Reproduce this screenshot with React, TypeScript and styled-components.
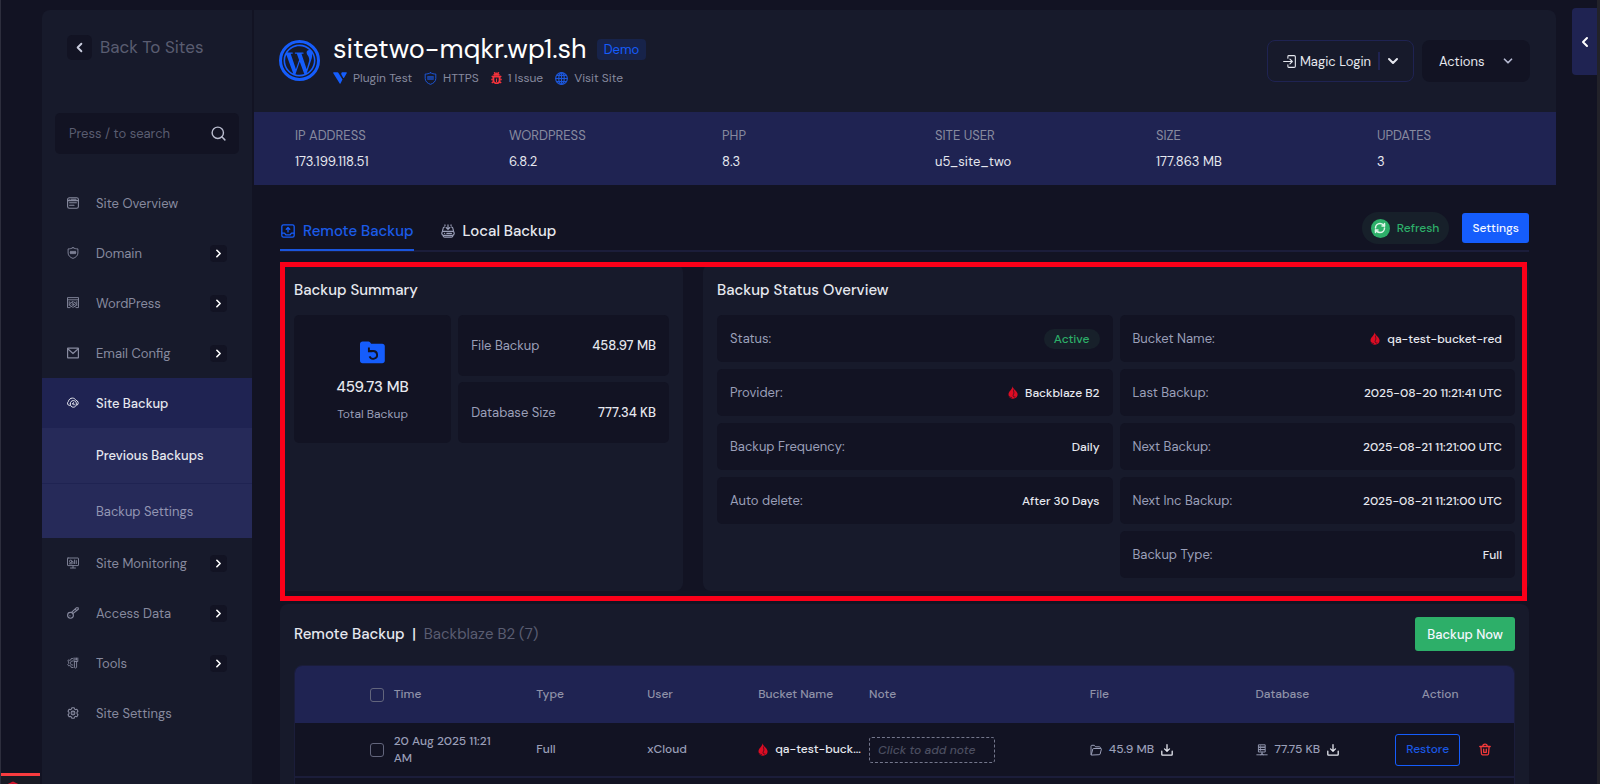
import React from 'react';
import styled, { createGlobalStyle } from 'styled-components';
import { ChevronDown, ChevronLeft, ChevronRight, RefreshCw, Search } from 'lucide-react';
import { FaWordpressSimple } from 'react-icons/fa';

const c = {
  bg: '#121323',
  panel: '#171a2b',
  navy: '#1f2352',
  navySub: '#262a59',
  blue: '#155dfc',
  green: '#2daf69',
  greenTint: '#17202a',
  text: '#e6e8ef',
  soft: '#9a9fb8',
  muted: '#878a9f',
  faint: '#5a5d71',
  line: '#1b1d3a',
};

const GlobalStyle = createGlobalStyle`
  *, *::before, *::after { box-sizing: border-box; }
  body {
    margin: 0;
    background: ${c.bg};
    color: ${c.text};
    font-family: "DM Sans", Inter, "Liberation Sans", sans-serif;
    font-size: 13px;
  }
  button, input { font: inherit; color: inherit; }
  button { cursor: pointer; }
  a { color: inherit; text-decoration: none; }
  h1, h2, dl, dd { margin: 0; padding: 0; }
  svg { display: block; flex: none; }
`;

/* ---------- page frame ---------- */

const Page = styled.div`
  position: relative;
  display: flex;
  gap: 2px;
  height: 100vh;
  overflow: hidden;
  padding: 10px 41px 0;
  border-left: 1px solid #2d2e3d;
  border-right: 3px solid #222229;
`;

const Sidebar = styled.aside`
  flex: 0 0 210px;
  min-width: 0;
  background: ${c.panel};
  border-top-left-radius: 8px;
`;

const Main = styled.main`
  flex: 1;
  min-width: 0;
`;

/* ---------- sidebar ---------- */

const BackLink = styled.a`
  display: flex;
  align-items: center;
  gap: 8px;
  padding: 25px 25px 0;
  font-size: 17px;
  line-height: 25px;
  white-space: nowrap;
  color: ${c.faint};
`;

const BackIcon = styled.span`
  display: grid;
  place-items: center;
  width: 25px;
  height: 25px;
  border-radius: 5px;
  background: ${c.bg};
  color: #c9ccdd;
`;

const SearchBox = styled.label`
  display: flex;
  align-items: center;
  height: 41px;
  margin: 53px 13px 24px;
  padding: 0 12px 0 14px;
  border-radius: 5px;
  background: ${c.bg};
  color: #b9bcce;
`;

const SearchInput = styled.input`
  flex: 1;
  width: 100%;
  min-width: 0;
  padding: 0;
  border: 0;
  outline: 0;
  background: none;
  &::placeholder { color: ${c.faint}; opacity: 1; }
`;

const NavLink = styled.a<{ $active?: boolean }>`
  display: flex;
  align-items: center;
  gap: 17px;
  height: 50px;
  padding: 0 25px;
  background: ${p => (p.$active ? c.navy : 'none')};
  color: ${p => (p.$active ? c.text : c.muted)};
  font-weight: ${p => (p.$active ? 500 : 400)};
`;

const NavLabel = styled.span`
  flex: 1;
  white-space: nowrap;
`;

const NavChevron = styled.span`
  display: grid;
  place-items: center;
  width: 17px;
  height: 17px;
  border-radius: 4px;
  background: ${c.bg};
  color: #fff;
`;

const SubLink = styled.a<{ $current?: boolean }>`
  display: flex;
  align-items: center;
  height: 55px;
  padding-left: 54px;
  background: ${c.navySub};
  color: ${p => (p.$current ? c.text : '#9396b3')};
  font-weight: ${p => (p.$current ? 500 : 400)};
  & + & { border-top: 1px solid ${c.navy}; }
`;

/* ---------- site header ---------- */

const Header = styled.header`
  display: flex;
  align-items: flex-start;
  gap: 13px;
  height: 102px;
  padding: 23px 26px 0 25px;
  background: ${c.panel};
  border-top-right-radius: 8px;
`;

const Logo = styled.span`
  display: grid;
  place-items: center;
  width: 41px;
  height: 41px;
  margin-top: 7px;
  border: 3px solid ${c.blue};
  border-radius: 50%;
  color: ${c.blue};
`;

const SiteInfo = styled.div`
  flex: 1;
`;

const TitleRow = styled.div`
  display: flex;
  align-items: center;
  gap: 10px;
`;

const Title = styled.h1`
  font-size: 27px;
  line-height: 32px;
  font-weight: 400;
  color: #fff;
`;

const DemoBadge = styled.span`
  padding: 0 7px;
  border-radius: 4px;
  background: #17234a;
  color: ${c.blue};
  font-size: 13px;
  line-height: 21px;
`;

const MetaRow = styled.div`
  display: flex;
  align-items: center;
  gap: 12px;
  margin-top: 5px;
`;

const MetaLink = styled.a`
  display: flex;
  align-items: center;
  gap: 6px;
  font-size: 12px;
  line-height: 16px;
  color: ${c.muted};
`;

const BlueIcon = styled.span`
  color: #1c56d8;
`;

const HeaderActions = styled.div`
  display: flex;
  gap: 8px;
  margin-top: 7px;
`;

const SplitButton = styled.div`
  display: flex;
  align-items: center;
  height: 42px;
  padding: 0 12px 0 15px;
  border: 1px solid ${c.navy};
  border-radius: 8px;
`;

const PlainButton = styled.button`
  display: flex;
  align-items: center;
  gap: 4px;
  padding: 0;
  border: 0;
  background: none;
`;

const MenuToggle = styled(PlainButton)`
  height: 18px;
  margin-left: 7px;
  padding-left: 5px;
  border-left: 2px solid ${c.navy};
`;

const ActionsButton = styled(PlainButton)`
  justify-content: space-between;
  width: 108px;
  height: 42px;
  padding: 0 15px 0 17px;
  border-radius: 8px;
  background: ${c.bg};
`;

/* ---------- stats ---------- */

const Stats = styled.dl`
  display: grid;
  grid-template-columns: 214fr 213fr 213fr 221fr 221fr 179fr;
  height: 73px;
  padding: 15px 0 0 41px;
  background: ${c.navy};
  line-height: 18px;
`;

const StatLabel = styled.dt`
  color: ${c.muted};
`;

const StatValue = styled.dd`
  margin-top: 8px;
  color: ${c.text};
`;

/* ---------- content ---------- */

const Content = styled.div`
  padding: 24px 27px 0 26px;
`;

const TabBar = styled.div`
  display: flex;
  align-items: flex-start;
  height: 43px;
  border-bottom: 2px solid ${c.line};
`;

const Tab = styled.button<{ $active?: boolean }>`
  display: flex;
  align-items: center;
  gap: 8px;
  height: 42px;
  margin-right: 26px;
  padding: 4px 0 0 1px;
  border: 0;
  border-bottom: 2px solid ${p => (p.$active ? '#1a55dc' : 'transparent')};
  background: none;
  color: ${p => (p.$active ? '#1b5be8' : c.text)};
  font-size: 15px;
  font-weight: 500;
  svg { color: ${p => (p.$active ? c.blue : c.soft)}; }
`;

const TabActions = styled.div`
  display: flex;
  align-items: center;
  gap: 13px;
  margin: 3px 0 0 auto;
`;

const RefreshButton = styled.button`
  display: flex;
  align-items: center;
  gap: 7px;
  height: 32px;
  padding: 0 10px 0 9px;
  border: 0;
  border-radius: 16px;
  background: ${c.greenTint};
  color: ${c.green};
  font-size: 12px;
  font-weight: 500;
`;

const RefreshDot = styled.span`
  display: grid;
  place-items: center;
  width: 19px;
  height: 19px;
  border-radius: 50%;
  background: ${c.green};
  color: #dff5e9;
`;

const SolidButton = styled.button<{ $tone: 'blue' | 'green' }>`
  height: ${p => (p.$tone === 'blue' ? 30 : 34)}px;
  padding: 0 ${p => (p.$tone === 'blue' ? 10 : 12)}px;
  border: 0;
  border-radius: 3px;
  background: ${p => (p.$tone === 'blue' ? c.blue : c.green)};
  color: #f4f7ff;
  font-size: ${p => (p.$tone === 'blue' ? 12 : 13)}px;
  font-weight: 500;
`;

const Overview = styled.section`
  position: relative;
  display: grid;
  grid-template-columns: 403fr 826fr;
  gap: 20px;
  margin-top: 12px;
`;

const Highlight = styled.div`
  position: absolute;
  inset: -2px 2px -10px 0;
  border: 5px solid #fb0019;
  pointer-events: none;
`;

const Card = styled.div`
  padding: 13px 14px;
  border-radius: 8px;
  background: ${c.panel};
`;

const CardTitle = styled.h2`
  margin-bottom: 12px;
  font-size: 15px;
  line-height: 26px;
  font-weight: 500;
`;

const SummaryGrid = styled.div`
  display: grid;
  grid-template-columns: 158fr 212fr;
  gap: 6px 7px;
`;

const Tile = styled.div`
  display: flex;
  align-items: center;
  justify-content: space-between;
  height: 61px;
  padding: 0 13px;
  border-radius: 5px;
  background: ${c.bg};
  color: ${c.soft};
`;

const TotalTile = styled(Tile)`
  grid-row: span 2;
  flex-direction: column;
  justify-content: flex-start;
  height: auto;
  padding-top: 26px;
  font-size: 12px;
`;

const TotalValue = styled.strong`
  margin: 14px 0 10px;
  font-size: 15px;
  line-height: 18px;
  font-weight: 500;
  color: ${c.text};
`;

const TileValue = styled.strong<{ $small?: boolean }>`
  display: flex;
  align-items: center;
  gap: 7px;
  font-size: ${p => (p.$small ? 12 : 13)}px;
  font-weight: 500;
  color: ${c.text};
`;

const StatusColumns = styled.div`
  display: grid;
  grid-template-columns: 1fr 1fr;
  gap: 7px;
`;

const StatusColumn = styled.div`
  display: flex;
  flex-direction: column;
  gap: 7px;
`;

const StatusTile = styled(Tile)`
  height: 47px;
`;

const ActiveBadge = styled.span`
  padding: 0 10px;
  border-radius: 10px;
  background: ${c.greenTint};
  color: ${c.green};
  font-size: 12px;
  line-height: 20px;
  font-weight: 500;
`;

/* ---------- backup table ---------- */

const ListCard = styled(Card)`
  margin-top: 13px;
`;

const ListHead = styled.div`
  display: flex;
  align-items: center;
  justify-content: space-between;
  margin-bottom: 14px;
`;

const ListTitle = styled.h2`
  font-size: 15px;
  font-weight: 500;
  span { margin-left: 4px; color: ${c.faint}; font-weight: 400; }
`;

const TableFrame = styled.div`
  overflow: hidden;
  border: 1px solid ${c.line};
  border-radius: 8px;
`;

const Table = styled.table`
  width: 100%;
  table-layout: fixed;
  border-collapse: collapse;
  font-size: 12px;
  font-weight: 500;
  line-height: 17px;
  color: ${c.soft};
`;

const HeadCell = styled.th<{ $center?: boolean }>`
  height: 57px;
  padding: 0;
  background: ${c.navy};
  color: #8f92a8;
  font-weight: 500;
  text-align: ${p => (p.$center ? 'center' : 'left')};
`;

const Cell = styled.td<{ $wrap?: boolean }>`
  height: 54px;
  padding: ${p => (p.$wrap ? '0 36px 0 0' : '0')};
  border-bottom: 2px solid ${c.line};
  background: ${c.bg};
`;

const Check = styled.input`
  appearance: none;
  display: block;
  width: 14px;
  height: 14px;
  margin: 0 0 0 75px;
  border: 1px solid #62657c;
  border-radius: 3px;
`;

const Inline = styled.div`
  display: flex;
  align-items: center;
  gap: 7px;
`;

const BucketName = styled.span`
  white-space: nowrap;
  color: ${c.text};
`;

const NoteInput = styled.input`
  display: block;
  width: 126px;
  height: 26px;
  padding: 0 8px;
  border: 1px dashed #74778c;
  border-radius: 3px;
  outline: 0;
  background: none;
  font-style: italic;
  &::placeholder { color: #4b4e60; opacity: 1; }
`;

const IconButton = styled.button<{ $danger?: boolean }>`
  display: block;
  padding: 0;
  border: 0;
  background: none;
  color: ${p => (p.$danger ? '#f43a3a' : '#e6e8f0')};
`;

const RowActions = styled.div`
  display: flex;
  align-items: center;
  justify-content: center;
  gap: 19px;
  padding-left: 6px;
`;

const RestoreButton = styled.button`
  width: 65px;
  height: 32px;
  padding: 0;
  border: 1px solid ${c.blue};
  border-radius: 3px;
  background: none;
  color: #1a58e4;
  font-weight: 500;
`;

/* ---------- floating pieces ---------- */

const DrawerToggle = styled.button`
  position: absolute;
  top: 8px;
  right: 0;
  display: grid;
  place-items: center;
  width: 25px;
  height: 67px;
  padding: 0;
  border: 0;
  border-radius: 4px 0 0 4px;
  background: ${c.navy};
  color: #fff;
`;

const DebugBar = styled.div`
  position: absolute;
  left: -1px;
  bottom: 0;
  width: 40px;
  height: 11px;
  padding: 1px 0 0 7px;
  overflow: hidden;
  border-top: 3px solid #f93c3f;
  background: #191a24;
`;

/* ---------- icons ---------- */

type IconProps = { children: React.ReactNode; w?: number; h?: number; sw?: number };
const Icon = ({ children, w = 12, h = w, sw = 1 }: IconProps) => (
  <svg width={w} height={h} viewBox="0 0 12 12" fill="none" stroke="currentColor" strokeWidth={sw} strokeLinecap="round" strokeLinejoin="round" aria-hidden="true">
    {children}
  </svg>
);

const OverviewIcon = () => (
  <Icon sw={1.1}><rect x=".6" y=".8" width="10.8" height="10.4" rx="1.8" /><path d="M.8 3.6h10.4M2.6 5.800h6.800M2.600 8.200h4.400M2.200 2.200h.1M4 2.200h5" /></Icon>
);
const ShieldIcon = ({ size = 12 }: { size?: number }) => (
  <Icon w={size} sw={0.9}><path d="M6 .7C7.500 1.500 9 1.900 10.900 1.900V6c0 2.700-2.200 4.500-4.900 5.400C3.300 10.500 1.100 8.700 1.100 6V1.900C3 1.900 4.500 1.500 6 .7Z" /><path d="M3.400 4.400h5.200M3.200 5.500h5.600M3.400 6.600h5.200" /></Icon>
);
const WindowGearIcon = () => (
  <Icon sw={0.9}><path d="M3 10.600H.5V.600h11v10H9M.6 2.800h10.800M2.200 4.600v4M9.800 4.600v4" /><circle cx="6" cy="7.500" r="1" /><path d="m6 4.500.9.9 1.300-.1.200 1.200 1 .9-1 .9-.2 1.300-1.300-.1-.9 1.100-.9-1.100-1.300.1-.2-1.300-1-.9 1-.9.2-1.200 1.300.1Z" /></Icon>
);
const MailIcon = () => (
  <Icon sw={1.2}><rect x=".6" y="1.200" width="10.800" height="9.600" rx=".3" /><path d="m1 2 5 4.500L11 2" /></Icon>
);
const CloudBackupIcon = () => (
  <Icon sw={1}><path d="M2.400 8.600A2.300 2.300 0 0 1 1.300 4.600C1.700 2.500 3.500 1.100 5.400 1.100c1.600 0 2.900.9 3.500 2.200a2.800 2.800 0 0 1 1.300 4.900" /><path d="M3.200 6.900c0-2 1.400-3.300 3.100-3.300S9.400 4.900 9.400 6.900 8 10.200 6.300 10.200 3.200 8.900 3.200 6.900M6.600 5.600 5.200 6.900h1.900v1" /></Icon>
);
const MonitorIcon = () => (
  <Icon sw={0.9}><rect x=".5" y="1" width="11" height="7.600" rx=".5" /><path d="M6 8.700v2M3.500 11h5M6 6.600V5M7.600 6.600V3M9.300 6.600V3.600M2.300 6.800h2.600" /><circle cx="3.800" cy="4.400" r="1.300" /></Icon>
);
const KeyIcon = () => (
  <Icon sw={1.1}><path d="M5.800 6.600 11.300 2.200 11.200.8 9.300.8 4.500 5.300M8.400 2.400l1 1" /><circle cx="3.500" cy="8.300" r="2.900" /><path d="M2.800 8.800h.2" /></Icon>
);
const ToolsIcon = () => (
  <Icon sw={0.9}><path d="M5.500 1.500H4.300L4 2.700l-1.500.6-.9-.5-.8 1.200.9.900v1.700l-.9.900.8 1.300 1.200-.2 1.200.7.300 1.200h1.800M5.700 4H4.500L3.600 5.200v1.600l.9 1.200h1.300M7 1v3.500h3.800V1M8.200 1v2M9.500 1v2M7.400 4.600v5.600c0 1.100 2.200 1.100 2.200 0V4.600" /></Icon>
);
const GearIcon = () => (
  <Icon sw={1.1}><path d="M4.900.7h2.200l.5 1.400.8.500 1.500-.3 1.100 1.900-1 1.200v1.200l1 1.200-1.100 1.900-1.500-.3-.8.500-.5 1.400H4.900l-.5-1.400-.8-.5-1.500.3L1 7.800l1-1.200V5.400L1 4.200l1.100-1.900 1.500.3.8-.5Z" /><circle cx="6" cy="6" r="1.900" /><circle cx="6" cy="6" r=".2" /></Icon>
);
const VultrIcon = () => (
  <svg width="14" height="12" viewBox="0 0 14 12" fill="#155dfc" aria-hidden="true">
    <path d="M.3.300h4.200c.4 0 .8.200 1 .6l4 6.500-2 4c-.2.400-.6.400-.8 0L.3 1.300Z" />
    <path d="M9.300.300h3.900c.5 0 .7.500.5.900l-2.600 4.600c-.2.400-.7.400-.9 0L8.600 3C7.900 1.800 8.300.500 9.300.300Z" />
  </svg>
);
const BugIcon = () => (
  <svg width="11" height="12" viewBox="0 0 11 12" aria-hidden="true">
    <path d="M2.800 3.200C2.800 1.700 4 1 5.500 1s2.700.7 2.700 2.200Z" fill="#f4333c" stroke="#f4333c" />
    <path d="M.7 4 2 5M10.300 4 9 5M.3 7.500h1.500M10.700 7.500H9.200M.8 11 2.200 9.800M10.200 11 8.800 9.800M3.200.3l.6.800M7.800.3l-.6.800" stroke="#f4333c" strokeWidth="1.400" />
    <path d="M2.400 4.600h6.200v3.600a3.100 3.100 0 0 1-6.200 0Z" fill="none" stroke="#f4333c" strokeWidth="1.800" />
    <path d="M5.500 6.600v3.600" stroke="#f4333c" />
  </svg>
);
const GlobeIcon = () => (
  <Icon w={13} sw={1.1}><circle cx="6" cy="6" r="5.400" /><ellipse cx="6" cy="6" rx="2.500" ry="5.400" /><path d="M6 .6v10.800M.6 6h10.800M1.500 3.200h9M1.500 8.800h9" /></Icon>
);
const LoginIcon = () => (
  <Icon w={13}><path d="M4.500 3V1.400c0-.5.300-.8.800-.8h5c.700 0 1.100.4 1.100 1.100v8.600c0 .7-.4 1.100-1.100 1.100h-5c-.5 0-.8-.3-.8-.8V9M.6 6h7.800M6.400 3.800 8.600 6 6.400 8.200" /></Icon>
);
const RemoteIcon = () => (
  <Icon w={14} sw={1.1}><rect x=".7" y=".7" width="10.600" height="10.600" rx="1.500" /><path d="M1 7.800h2l1.200 1.600h3.600L9 7.800h2M6 6.800V3.200M4.500 4.500 6 3l1.500 1.500" /></Icon>
);
const LocalIcon = () => (
  <Icon w={14}><path d="M3 2.600c-.8.100-1.100.5-1.200 1.200L1.300 6.200M9 2.600c.8.100 1.100.5 1.200 1.200l.5 2.400M6 .8v3.600M4.400 3 6 4.600 7.600 3M3.400.8v.6M8.600.8v.6" /><rect x=".7" y="6.300" width="10.600" height="3.400" rx="1.500" /><path d="M1.800 10.200c.2.700.6 1.100 1.300 1.100h5.800c.7 0 1.100-.4 1.300-1.100M3 8h.1M5 8h4" /></Icon>
);
const FlameIcon = () => (
  <svg width="10" height="13" viewBox="0 0 10 13" aria-hidden="true">
    <path d="M4.600.2c.3 1.600 1 2.500 2.300 3.700C8.500 5.400 9.600 6.700 9.600 8.600c0 2.500-2 4.100-4.500 4.100S.5 11 .5 8.400C.5 5 4.300 3.800 4.600.2Z" fill="#dd0c23" />
    <path d="M5.500 3.600c-.3 1.600.8 2.600.2 4.200-.4 1-.9 1.600-.4 2.500.5.800 1.300.8 2 .5M1 10.200c1 1.100 2 1.400 3 1.400" fill="none" stroke="#121323" strokeWidth=".7" />
  </svg>
);
const FolderRestoreIcon = () => (
  <svg width="25" height="23" viewBox="0 0 25 23" fill="none" aria-hidden="true">
    <path d="M2.600.5h5.800c.7 0 1.200.3 1.600.8l1.200 1.500h11c1.500 0 2.600 1 2.600 2.500v14.400c0 1.500-1.100 2.500-2.600 2.500H2.600C1.100 22.200 0 21.200 0 19.700V3C0 1.500 1.100.5 2.600.5Z" fill="#155dfc" />
    <path d="M8.900 6.600v3.600h3.600M9.200 10h4a3.900 3.900 0 1 1-3.600 5.400" stroke="#121323" strokeWidth="1.900" />
  </svg>
);
const FolderIcon = () => (
  <Icon><path d="M1 10.500V2.200c0-.6.300-.9.900-.9h2.400l1.200 1.500h4c.6 0 .9.400.9 1v.8M1.300 10.700 2.800 5c.1-.3.400-.5.700-.5h7.300c.5 0 .7.300.6.700l-1.300 4.900c-.1.400-.4.600-.8.600Z" /></Icon>
);
const DatabaseIcon = () => (
  <Icon sw={0.9}><path d="M2.800.8h6.400v2.400H2.800ZM2.800 3.200h6.400v2.400H2.800ZM2.800 5.600h6.400V8H2.800ZM6 8v2.400M.8 10.800h10.400M4.600 10.800c0-1.400 2.800-1.400 2.800 0M4.400 2h.1M4.400 4.400h.1M4.400 6.800h.1" /></Icon>
);
const DownloadIcon = () => (
  <Icon sw={1.3}><path d="M6 .7v6.500M3.500 4.900 6 7.300l2.500-2.400M.8 7.200v3.400c0 .4.200.6.600.6h9.200c.4 0 .6-.2.6-.6V7.200" /></Icon>
);
const TrashIcon = () => (
  <Icon w={12} h={13} sw={1.3}><path d="M.8 3h10.400M3.800 2.800C3.800 1.300 4.500.700 6 .700s2.200.6 2.200 2.100M1.900 3.200l.6 7.200c.1.600.4.900 1 .9h5c.6 0 .9-.3 1-.9l.6-7.200M4.700 5.600v3.200h2.600V5.600" /></Icon>
);

/* ---------- data ---------- */

type NavEntry = { label: string; icon: React.ReactNode; more?: boolean; children?: string[] };
const nav: NavEntry[] = [
  { label: 'Site Overview', icon: <OverviewIcon /> },
  { label: 'Domain', icon: <ShieldIcon />, more: true },
  { label: 'WordPress', icon: <WindowGearIcon />, more: true },
  { label: 'Email Config', icon: <MailIcon />, more: true },
  { label: 'Site Backup', icon: <CloudBackupIcon />, children: ['Previous Backups', 'Backup Settings'] },
  { label: 'Site Monitoring', icon: <MonitorIcon />, more: true },
  { label: 'Access Data', icon: <KeyIcon />, more: true },
  { label: 'Tools', icon: <ToolsIcon />, more: true },
  { label: 'Site Settings', icon: <GearIcon /> },
];

const stats = [
  ['IP ADDRESS', '173.199.118.51'],
  ['WORDPRESS', '6.8.2'],
  ['PHP', '8.3'],
  ['SITE USER', 'u5_site_two'],
  ['SIZE', '177.863 MB'],
  ['UPDATES', '3'],
];

type StatusEntry = { label: string; value: string; badge?: boolean; flame?: boolean };
const statusColumns: StatusEntry[][] = [
  [
    { label: 'Status:', value: 'Active', badge: true },
    { label: 'Provider:', value: 'Backblaze B2', flame: true },
    { label: 'Backup Frequency:', value: 'Daily' },
    { label: 'Auto delete:', value: 'After 30 Days' },
  ],
  [
    { label: 'Bucket Name:', value: 'qa-test-bucket-red', flame: true },
    { label: 'Last Backup:', value: '2025-08-20 11:21:41 UTC' },
    { label: 'Next Backup:', value: '2025-08-21 11:21:00 UTC' },
    { label: 'Next Inc Backup:', value: '2025-08-21 11:21:00 UTC' },
    { label: 'Backup Type:', value: 'Full' },
  ],
];

/* column widths as shares of the table */
const ColCheck = styled.col`width: 8.1%;`;
const ColTime = styled.col`width: 11.7%;`;
const ColStandard = styled.col`width: 9.1%;`;
const ColNote = styled.col`width: 18.1%;`;
const ColFile = styled.col`width: 13.6%;`;
const ColAction = styled.col`width: 12.1%;`;

export default function App() {
  return (
    <>
      <GlobalStyle />
      <Page>
        <Sidebar>
          <BackLink href="#sites">
            <BackIcon><ChevronLeft size={15} strokeWidth={3} /></BackIcon>
            Back To Sites
          </BackLink>
          <SearchBox>
            <SearchInput type="text" placeholder="Press / to search" aria-label="Search" />
            <Search size={17} strokeWidth={2} />
          </SearchBox>
          <nav>
            {nav.map(item => (
              <React.Fragment key={item.label}>
                <NavLink href="#section" $active={!!item.children}>
                  {item.icon}
                  <NavLabel>{item.label}</NavLabel>
                  {item.more && <NavChevron><ChevronRight size={13} strokeWidth={3} /></NavChevron>}
                </NavLink>
                {item.children?.map((child, i) => (
                  <SubLink key={child} href="#section" $current={i === 0}>{child}</SubLink>
                ))}
              </React.Fragment>
            ))}
          </nav>
        </Sidebar>

        <Main>
          <Header>
            <Logo><FaWordpressSimple size={33} /></Logo>
            <SiteInfo>
              <TitleRow>
                <Title>sitetwo-mqkr.wp1.sh</Title>
                <DemoBadge>Demo</DemoBadge>
              </TitleRow>
              <MetaRow>
                <MetaLink href="#plugin"><VultrIcon />Plugin Test</MetaLink>
                <MetaLink href="#https"><BlueIcon><ShieldIcon size={13} /></BlueIcon>HTTPS</MetaLink>
                <MetaLink href="#issues"><BugIcon />1 Issue</MetaLink>
                <MetaLink href="#visit"><BlueIcon><GlobeIcon /></BlueIcon>Visit Site</MetaLink>
              </MetaRow>
            </SiteInfo>
            <HeaderActions>
              <SplitButton>
                <PlainButton><LoginIcon />Magic Login</PlainButton>
                <MenuToggle aria-label="More login options"><ChevronDown size={16} strokeWidth={3} /></MenuToggle>
              </SplitButton>
              <ActionsButton>Actions<ChevronDown size={14} strokeWidth={3} color="#b4b8d0" /></ActionsButton>
            </HeaderActions>
          </Header>

          <Stats>
            {stats.map(([label, value]) => (
              <div key={label}>
                <StatLabel>{label}</StatLabel>
                <StatValue>{value}</StatValue>
              </div>
            ))}
          </Stats>

          <Content>
            <TabBar>
              <Tab $active><RemoteIcon />Remote Backup</Tab>
              <Tab><LocalIcon />Local Backup</Tab>
              <TabActions>
                <RefreshButton><RefreshDot><RefreshCw size={12} strokeWidth={3} /></RefreshDot>Refresh</RefreshButton>
                <SolidButton $tone="blue">Settings</SolidButton>
              </TabActions>
            </TabBar>

            <Overview>
              <Card>
                <CardTitle>Backup Summary</CardTitle>
                <SummaryGrid>
                  <TotalTile>
                    <FolderRestoreIcon />
                    <TotalValue>459.73 MB</TotalValue>
                    Total Backup
                  </TotalTile>
                  <Tile>File Backup<TileValue>458.97 MB</TileValue></Tile>
                  <Tile>Database Size<TileValue>777.34 KB</TileValue></Tile>
                </SummaryGrid>
              </Card>
              <Card>
                <CardTitle>Backup Status Overview</CardTitle>
                <StatusColumns>
                  {statusColumns.map((rows, i) => (
                    <StatusColumn key={i}>
                      {rows.map(row => (
                        <StatusTile key={row.label}>
                          {row.label}
                          {row.badge
                            ? <ActiveBadge>{row.value}</ActiveBadge>
                            : <TileValue $small>{row.flame && <FlameIcon />}{row.value}</TileValue>}
                        </StatusTile>
                      ))}
                    </StatusColumn>
                  ))}
                </StatusColumns>
              </Card>
              <Highlight />
            </Overview>

            <ListCard>
              <ListHead>
                <ListTitle>Remote Backup &nbsp;| <span>Backblaze B2 (7)</span></ListTitle>
                <SolidButton $tone="green">Backup Now</SolidButton>
              </ListHead>
              <TableFrame>
                <Table>
                  <colgroup>
                    <ColCheck /><ColTime /><ColStandard /><ColStandard /><ColStandard /><ColNote /><ColFile /><ColStandard /><ColAction />
                  </colgroup>
                  <thead>
                    <tr>
                      <HeadCell><Check type="checkbox" aria-label="Select all backups" /></HeadCell>
                      <HeadCell>Time</HeadCell>
                      <HeadCell>Type</HeadCell>
                      <HeadCell>User</HeadCell>
                      <HeadCell>Bucket Name</HeadCell>
                      <HeadCell>Note</HeadCell>
                      <HeadCell>File</HeadCell>
                      <HeadCell>Database</HeadCell>
                      <HeadCell $center>Action</HeadCell>
                    </tr>
                  </thead>
                  <tbody>
                    <tr>
                      <Cell><Check type="checkbox" aria-label="Select this backup" /></Cell>
                      <Cell $wrap>20 Aug 2025 11:21 AM</Cell>
                      <Cell>Full</Cell>
                      <Cell>xCloud</Cell>
                      <Cell><Inline><FlameIcon /><BucketName>qa-test-buck...</BucketName></Inline></Cell>
                      <Cell><NoteInput type="text" placeholder="Click to add note" aria-label="Note" /></Cell>
                      <Cell><Inline><FolderIcon />45.9 MB<IconButton aria-label="Download files"><DownloadIcon /></IconButton></Inline></Cell>
                      <Cell><Inline><DatabaseIcon />77.75 KB<IconButton aria-label="Download database"><DownloadIcon /></IconButton></Inline></Cell>
                      <Cell>
                        <RowActions>
                          <RestoreButton>Restore</RestoreButton>
                          <IconButton $danger aria-label="Delete backup"><TrashIcon /></IconButton>
                        </RowActions>
                      </Cell>
                    </tr>
                    <tr><Cell colSpan={9} /></tr>
                  </tbody>
                </Table>
              </TableFrame>
            </ListCard>
          </Content>
        </Main>

        <DrawerToggle aria-label="Open panel"><ChevronLeft size={16} strokeWidth={3} /></DrawerToggle>
        <DebugBar>
          <svg width="12" height="14" viewBox="0 0 12 14" fill="none" stroke="#d5122c" strokeWidth="2" aria-hidden="true">
            <path d="M1 9V8l5-2.500L11 8v4" />
          </svg>
        </DebugBar>
      </Page>
    </>
  );
}
